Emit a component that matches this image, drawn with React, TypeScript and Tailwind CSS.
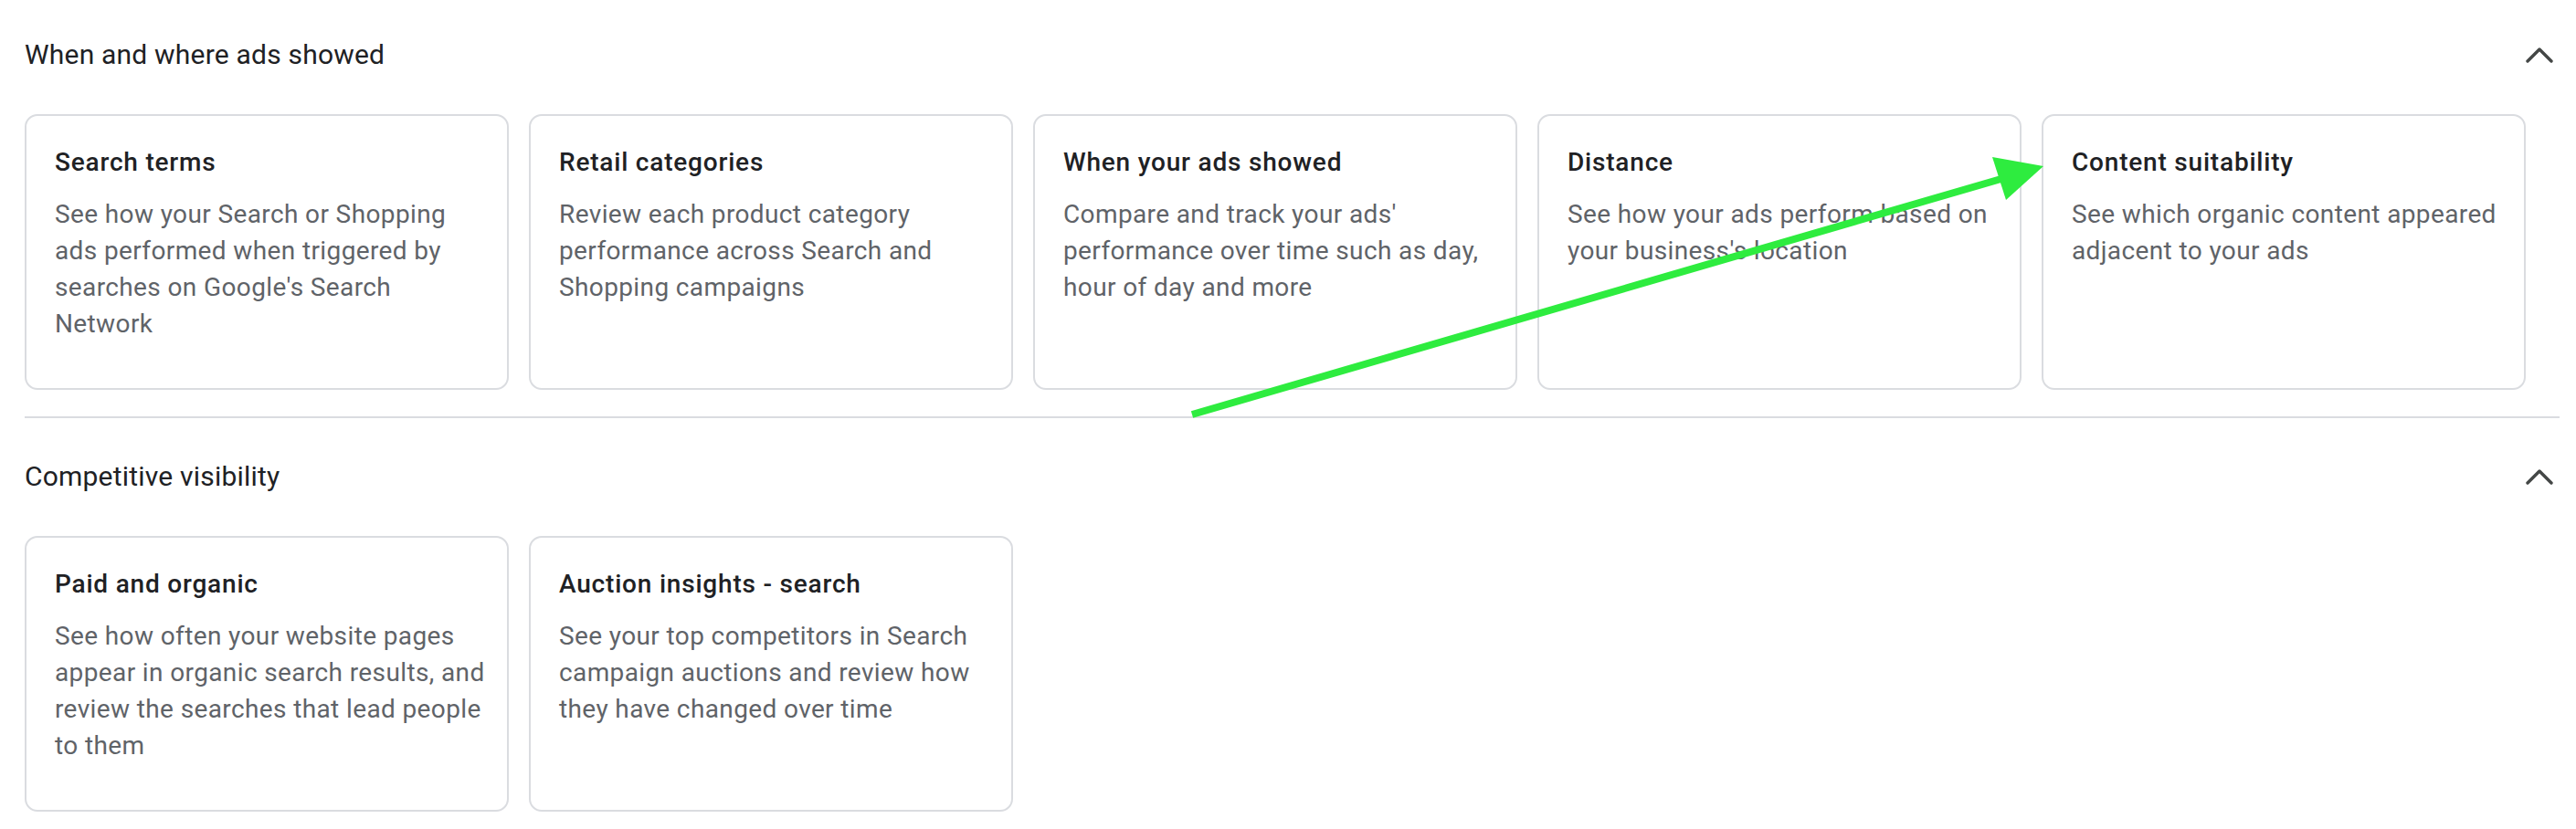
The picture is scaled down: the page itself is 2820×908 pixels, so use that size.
import React from 'react';

type Report = { title: string; lines: string[] };

const sections: { title: string; reports: Report[] }[] = [
  {
    title: 'When and where ads showed',
    reports: [
      {
        title: 'Search terms',
        lines: ['See how your Search or Shopping', 'ads performed when triggered by', "searches on Google's Search", 'Network'],
      },
      {
        title: 'Retail categories',
        lines: ['Review each product category', 'performance across Search and', 'Shopping campaigns'],
      },
      {
        title: 'When your ads showed',
        lines: ["Compare and track your ads'", 'performance over time such as day,', 'hour of day and more'],
      },
      {
        title: 'Distance',
        lines: ['See how your ads perform based on', "your business's location"],
      },
      {
        title: 'Content suitability',
        lines: ['See which organic content appeared', 'adjacent to your ads'],
      },
    ],
  },
  {
    title: 'Competitive visibility',
    reports: [
      {
        title: 'Paid and organic',
        lines: [
          'See how often your website pages',
          'appear in organic search results, and',
          'review the searches that lead people',
          'to them',
        ],
      },
      {
        title: 'Auction insights - search',
        lines: ['See your top competitors in Search', 'campaign auctions and review how', 'they have changed over time'],
      },
    ],
  },
];

function ChevronUp() {
  return (
    <svg width="30" height="18" viewBox="0 0 30 18" fill="none" className="mr-[7px]">
      <path d="M2 16 L15 3 L28 16" stroke="#444746" strokeWidth="3.4" strokeLinecap="round" strokeLinejoin="round" />
    </svg>
  );
}

function ReportCard({ report }: { report: Report }) {
  return (
    <div className="h-[302px] w-[530px] shrink-0 rounded-[14px] border-2 border-[#dadce0] bg-white pl-[31px] pr-[16px] pt-[31px]">
      <div className="text-[28px] font-medium leading-[40px] tracking-[0.8px] text-[#202124]">{report.title}</div>
      <div className="mt-[17px] text-[28px] leading-[40px] tracking-[0.38px] text-[#5f6368]">
        {report.lines.map((l) => (
          <div key={l} className="whitespace-nowrap">
            {l}
          </div>
        ))}
      </div>
    </div>
  );
}

export default function App() {
  return (
    <div
      className="relative h-[908px] w-[2820px] overflow-hidden bg-white pl-[27px] pr-[18px]"
      style={{ fontFamily: 'Roboto, "Noto Sans", Arial, sans-serif' }}
    >
      {sections.map((s, i) => (
        <section
          key={s.title}
          className={i === 0 ? 'border-b-2 border-[#dadce0] pb-[29px] pt-[40px]' : 'pt-[44px]'}
        >
          <div className="flex h-[40px] items-center justify-between">
            <h2 className="text-[30px] font-normal leading-[40px] tracking-[0.2px] text-[#202124]">{s.title}</h2>
            <ChevronUp />
          </div>
          <div className="mt-[45px] flex gap-[22px]">
            {s.reports.map((r) => (
              <ReportCard key={r.title} report={r} />
            ))}
          </div>
        </section>
      ))}

      {/* annotation arrow laid over the cards */}
      <svg
        className="pointer-events-none absolute left-0 top-0"
        width="2820"
        height="908"
        viewBox="0 0 2820 908"
      >
        <line x1="1305" y1="454" x2="2194" y2="195" stroke="#2eec3f" strokeWidth="8" />
        <polygon points="2237,182 2181,172 2196,219" fill="#2eec3f" />
      </svg>
    </div>
  );
}
